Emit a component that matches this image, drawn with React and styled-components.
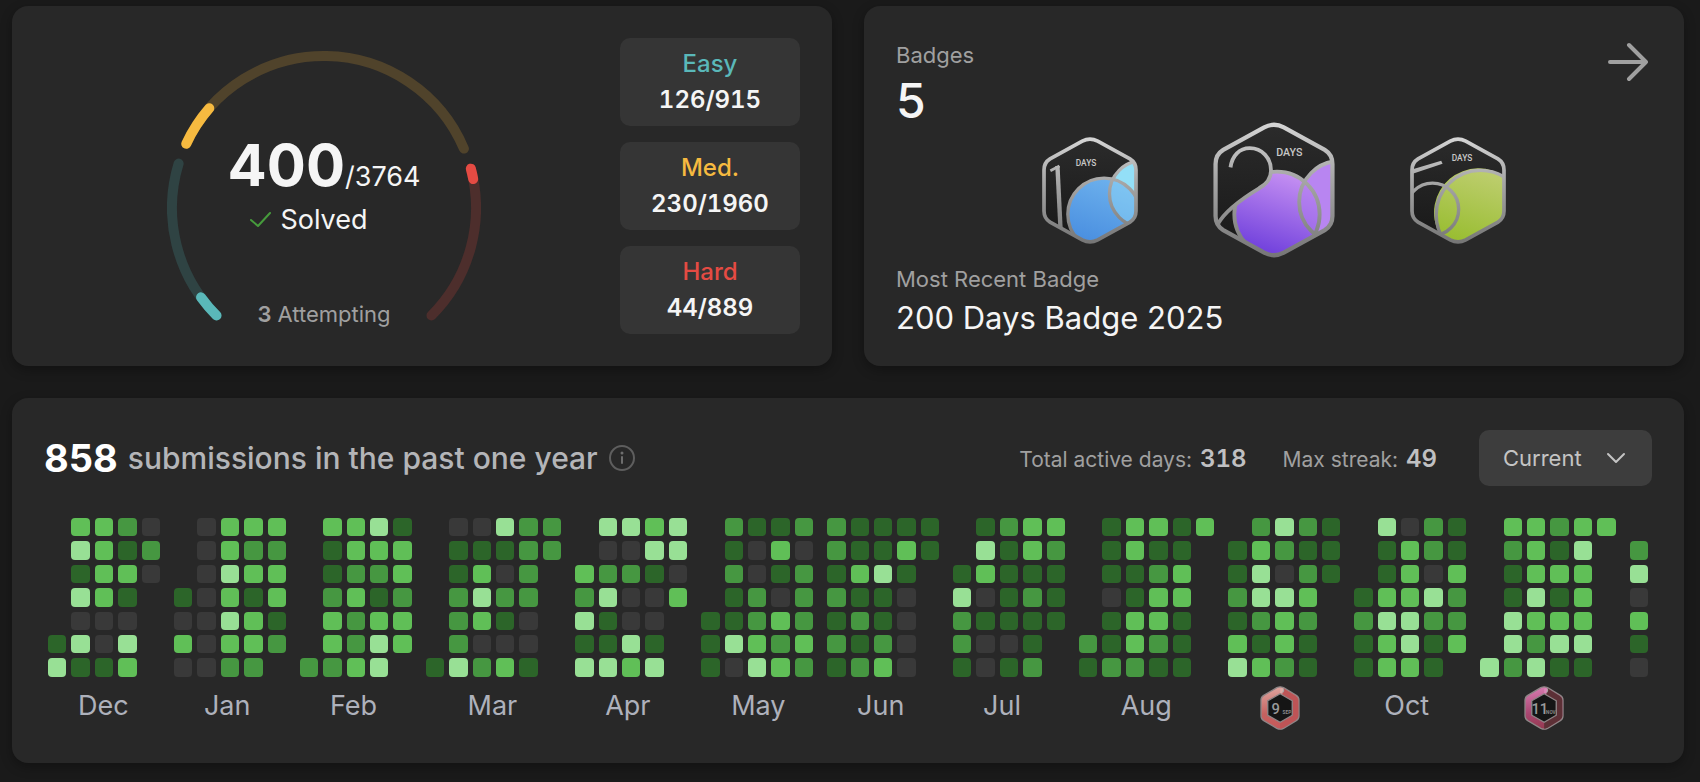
import React from "react";
import styled, { createGlobalStyle } from "styled-components";

// one string per weekday, one character per week
// "." no day, 0 nothing submitted, 1-4 how busy the day was
const months = [
  { key: "dec", label: "Dec", days: [".3320", ".4312", ".1330", ".431.", ".000.", "1404.", "4113."] },
  { key: "jan", label: "Jan", days: [".0333", ".0322", ".0433", "10313", "00431", "30332", "0022."] },
  { key: "feb", label: "Feb", days: [".3341", ".1333", ".1223", ".2312", ".3233", ".3243", "2234."] },
  { key: "mar", label: "Mar", days: [".00422", ".11122", ".1302.", ".2422.", ".2310.", ".2000.", "14231."] },
  { key: "apr", label: "Apr", days: [".4434", ".0044", "32210", "24003", "4100.", "1141.", "4434."] },
  { key: "may", label: "May", days: [".2112", ".1030", ".2012", ".1202", "11232", "14323", "10432"] },
  { key: "jun", label: "Jun", days: ["21111", "21131", "1341.", "2110.", "1210.", "2120.", "1230."] },
  { key: "jul", label: "Jul", days: [".1233", ".4132", "13111", "40121", "21111", "2001.", "1012."] },
  { key: "aug", label: "Aug", days: [".13313", ".1311.", ".1123.", ".0133.", ".1331.", "21321.", "12211."] },
  { key: "sep", badge: "9", days: [".2421", "13211", "14021", "2443.", "1232.", "3131.", "4321."] },
  { key: "oct", label: "Oct", days: [".4021", ".1321", ".1303", "13342", "24422", "13413", "1331."] },
  { key: "nov", badge: "11", days: [".33233", ".2314.", ".1333.", ".1413.", ".4333.", ".4244.", "42411."] },
  { key: "dec-now", days: [".", "2", "4", "0", "3", "1", "0"] },
];

const levels = {
  ".": "transparent",
  0: "#393939",
  1: "#2c6529",
  2: "#469741",
  3: "#60bf57",
  4: "#98e095",
};

const stats = [
  { name: "Easy", count: "126/915", color: "#5ab8b9" },
  { name: "Med.", count: "230/1960", color: "#f6ba40" },
  { name: "Hard", count: "44/889", color: "#e54b43" },
];

// angles in degrees, clockwise from three o'clock
const arcs = [
  { from: 135, to: 197, done: 144, color: "#5ab8b9", track: "#2f4343" },
  { from: 205, to: 337, done: 221, color: "#f6ba40", track: "#50432b" },
  { from: 345, to: 405, done: 349, color: "#e54b43", track: "#4d2e2c" },
];

const arcPath = (from, to) => {
  const point = (deg) => {
    const a = (deg * Math.PI) / 180;
    return `${157 + 152 * Math.cos(a)} ${170 + 152 * Math.sin(a)}`;
  };
  return `M${point(from)} A152 152 0 0 1 ${point(to)}`;
};

const HEX =
  "M120 12 Q143 0 166 12 L262 65 Q280 76 280 98 L280 220 Q280 242 262 253 L166 306 Q143 318 120 306 L24 253 Q6 242 6 220 L6 98 Q6 76 24 65 Z";

const BadgeDefs = ({ id, stops }) => (
  <defs>
    <linearGradient id={`${id}-metal`} gradientUnits="userSpaceOnUse" x1="0" y1="0" x2="0" y2="318">
      <stop offset="0" stopColor="#d6d6d6" />
      <stop offset="0.4" stopColor="#a8a8a8" />
      <stop offset="1" stopColor="#757575" />
    </linearGradient>
    <linearGradient id={`${id}-fill`} gradientUnits="userSpaceOnUse" x1="200" y1="100" x2="130" y2="310">
      <stop offset="0" stopColor={stops[0]} />
      <stop offset="1" stopColor={stops[1]} />
    </linearGradient>
    <linearGradient id={`${id}-dark`} x1="0" y1="0" x2="0" y2="1">
      <stop offset="0" stopColor="#2b2b2b" />
      <stop offset="1" stopColor="#181818" />
    </linearGradient>
    <clipPath id={`${id}-hex`}>
      <path d={HEX} />
    </clipPath>
  </defs>
);

const Badge100 = () => (
  <BadgeArt viewBox="0 0 286 318" role="img" aria-label="100 Days Badge">
    <BadgeDefs id="b100" stops={["#70b4ee", "#4a8fe0"]} />
    <path d={HEX} fill="url(#b100-dark)" />
    <g clipPath="url(#b100-hex)" fill="none" stroke="url(#b100-metal)" strokeWidth="10">
      <circle cx="300" cy="169" r="99" fill="#8edcf6" stroke="none" />
      <circle cx="185" cy="230" r="108" fill="url(#b100-fill)" stroke="none" />
      <circle cx="300" cy="169" r="99" fill="#9be4fa" fillOpacity="0.4" stroke="none" />
      <circle cx="185" cy="230" r="108" />
      <circle cx="300" cy="169" r="99" />
      <path d="M46 86 L55 270" strokeWidth="13" />
      <path d="M25 100 L52 86" strokeWidth="8" />
    </g>
    <path d={HEX} fill="none" stroke="url(#b100-metal)" strokeWidth="11" />
    <BadgeText x="131" y="86">DAYS</BadgeText>
  </BadgeArt>
);

const Badge200 = () => (
  <BadgeArt $large viewBox="0 0 286 318" role="img" aria-label="200 Days Badge">
    <BadgeDefs id="b200" stops={["#d09af5", "#7040dc"]} />
    <clipPath id="b200-two">
      <path d="M136 0 V113 C136 135 124 146 108 155 C80 172 30 205 12 238 V318 H286 V0 Z" />
    </clipPath>
    <path d={HEX} fill="url(#b200-dark)" />
    <g clipPath="url(#b200-hex)" fill="none" stroke="url(#b200-metal)" strokeWidth="9">
      <g clipPath="url(#b200-two)">
        <circle cx="298" cy="187" r="96" fill="#c08df2" stroke="none" />
        <circle cx="150" cy="216" r="100" fill="url(#b200-fill)" stroke="none" />
        <circle cx="298" cy="187" r="96" fill="#b07cf0" fillOpacity="0.45" stroke="none" />
        <circle cx="150" cy="216" r="100" />
        <circle cx="298" cy="187" r="96" />
      </g>
      <path d="M41 106 C45 78 62 61 86 61 C115 61 136 84 136 113 C136 135 124 146 108 155 C80 172 30 205 12 238" />
    </g>
    <path d={HEX} fill="none" stroke="url(#b200-metal)" strokeWidth="10" />
    <BadgeText x="179" y="79">DAYS</BadgeText>
  </BadgeArt>
);

const Badge50 = () => (
  <BadgeArt viewBox="0 0 286 318" role="img" aria-label="50 Days Badge">
    <BadgeDefs id="b50" stops={["#bccd6c", "#98bd30"]} />
    <path d={HEX} fill="url(#b50-dark)" />
    <g clipPath="url(#b50-hex)" fill="none" stroke="url(#b50-metal)" strokeWidth="10">
      <path d="M88 289 A132 132 0 0 1 286 122 V318 H140 Z" fill="url(#b50-fill)" stroke="none" />
      <circle cx="210" cy="231" r="132" />
      <circle cx="67" cy="215" r="78" />
      <path d="M8 96 L93 70 L97 79 L8 109 Z" fill="url(#b50-metal)" stroke="none" />
    </g>
    <path d={HEX} fill="none" stroke="url(#b50-metal)" strokeWidth="11" />
    <BadgeText x="155" y="70">DAYS</BadgeText>
  </BadgeArt>
);

const MonthBadge = ({ value }) => {
  const sep = value === "9";
  const id = `m${value}`;
  return (
    <MonthArt viewBox="0 0 119 131" role="img" aria-label={sep ? "September badge" : "November badge"}>
      <defs>
        <linearGradient id={id} x1="0.4" y1="0" x2="0.5" y2="1">
          <stop offset="0" stopColor={sep ? "#dfa59f" : "#d77bb0"} />
          <stop offset="0.6" stopColor={sep ? "#c56260" : "#a84670"} />
          <stop offset="1" stopColor={sep ? "#c8585a" : "#963a50"} />
        </linearGradient>
      </defs>
      <path
        d="M50 5 Q60 0 70 5 L108 28 Q116 33 116 42 V89 Q116 98 108 103 L70 126 Q60 131 50 126 L11 103 Q3 98 3 89 V42 Q3 33 11 28 Z"
        fill={`url(#${id})`}
        stroke="#8e8586"
        strokeWidth="4"
      />
      <path
        d="M70 7 L106 29 Q114 34 114 42 V89 Q114 97 106 102 L70 124 Q64 127 60 127 V106 L96 86 V45 L66 27 Z"
        fill={sep ? "#bd5456" : "#5c3036"}
      />
      <path d="M66 6 Q72 12 68 18 L60 23 V8 Z" fill={sep ? "#dcaea8" : "#dd86b8"} />
      <path d="M70 8 Q72 14 67 20" fill="none" stroke="#aaa" strokeWidth="3" />
      <path d="M60 23 L96 44 V87 L60 108 L23 87 V44 Z" fill="#151515" stroke="#8e8586" strokeWidth="4" />
      <MonthNumber x="47" y="84">{value}</MonthNumber>
      <MonthName x="80" y="84">{sep ? "SEP" : "NOV"}</MonthName>
    </MonthArt>
  );
};

const Progress = () => (
  <ProgressBox>
    <Ring viewBox="0 0 314 296" aria-hidden="true">
      {arcs.map((arc) => (
        <g key={arc.from} fill="none" strokeWidth="10" strokeLinecap="round">
          <path d={arcPath(arc.from, arc.to)} stroke={arc.track} />
          <path d={arcPath(arc.from, arc.done)} stroke={arc.color} />
        </g>
      ))}
    </Ring>
    <ProgressText>
      <Total>
        <b>400</b>/3764
      </Total>
      <Solved>
        <svg width="22" height="16" viewBox="0 0 22 16" aria-hidden="true">
          <path d="M1 8 L8 14 L20 1" fill="none" stroke="#469b3c" strokeWidth="2" strokeLinecap="round" strokeLinejoin="round" />
        </svg>
        <span>Solved</span>
      </Solved>
      <Attempting>
        <b>3</b> Attempting
      </Attempting>
    </ProgressText>
  </ProgressBox>
);

const App = () => {
  return (
    <Page>
      <GlobalStyle />
      <TopCards>
        <SolvedCard>
          <Progress />
          <Stats>
            {stats.map(({ name, count, color }) => (
              <Stat key={name}>
                <StatName $color={color}>{name}</StatName>
                <StatCount>{count}</StatCount>
              </Stat>
            ))}
          </Stats>
        </SolvedCard>
        <BadgesCard>
          <BadgesHead>
            <div>
              <Muted>Badges</Muted>
              <BadgeCount>5</BadgeCount>
            </div>
            <ArrowLink href="#badges" aria-label="All badges">
              <svg width="40" height="40" viewBox="0 0 40 40" aria-hidden="true">
                <path d="M2 20 H38 M21 3 L38 20 L21 37" fill="none" stroke="#a0a0a0" strokeWidth="4" strokeLinecap="round" strokeLinejoin="round" />
              </svg>
            </ArrowLink>
          </BadgesHead>
          <BadgeRow>
            <Badge100 />
            <Badge200 />
            <Badge50 />
          </BadgeRow>
          <Recent>
            <Muted>Most Recent Badge</Muted>
            <RecentName>200 Days Badge 2025</RecentName>
          </Recent>
        </BadgesCard>
      </TopCards>

      <CalendarCard>
        <CalendarHead>
          <Submissions>
            <b>858</b>
            <span>submissions in the past one year</span>
            <svg width="28" height="28" viewBox="0 0 28 28" aria-hidden="true">
              <circle cx="14" cy="14" r="12" fill="none" stroke="#5e5e5e" strokeWidth="2" />
              <circle cx="14" cy="9" r="1.5" fill="#6e6e6e" />
              <path d="M14 13 V19" stroke="#6e6e6e" strokeWidth="2" strokeLinecap="round" />
            </svg>
          </Submissions>
          <Summary>
            Total active days: <b>318</b>
          </Summary>
          <Summary>
            Max streak: <b>49</b>
          </Summary>
          <Picker>
            <select aria-label="Year" defaultValue="Current">
              <option>Current</option>
              <option>2025</option>
              <option>2024</option>
            </select>
            <svg width="20" height="12" viewBox="0 0 20 12" aria-hidden="true">
              <path d="M2 2 L10 10 L18 2" fill="none" stroke="#c4c4c4" strokeWidth="2" strokeLinecap="round" strokeLinejoin="round" />
            </svg>
          </Picker>
        </CalendarHead>
        <Calendar>
          {months.map(({ key, label, badge, days }) => (
            <Month key={key} $weeks={days[0].length}>
              <Days $weeks={days[0].length}>
                {days.join("").split("").map((level, i) => (
                  <Day key={i} $level={level} />
                ))}
              </Days>
              <MonthLabel>
                {label}
                {badge && <MonthBadge value={badge} />}
              </MonthLabel>
            </Month>
          ))}
        </Calendar>
      </CalendarCard>
    </Page>
  );
};

export default App;

const GlobalStyle = createGlobalStyle`
  * {
    box-sizing: border-box;
  }
  body {
    margin: 0;
    background-color: #1a1a1a;
    color: #f5f5f5;
    font-family: "Inter", "Liberation Sans", sans-serif;
    font-size: 22px;
  }
`;
const Page = styled.main`
  display: flex;
  flex-direction: column;
  gap: 32px;
  padding: 6px 16px 18px 12px;
`;
const TopCards = styled.div`
  display: grid;
  grid-template-columns: 1fr 1fr;
  gap: 32px;
`;
const Card = styled.section`
  background-color: #282828;
  border-radius: 16px;
  padding: 32px;
  box-shadow: 0 4px 12px rgba(0, 0, 0, 0.3);
`;
const SolvedCard = styled(Card)`
  display: flex;
  gap: 16px;
`;
const ProgressBox = styled.div`
  flex: 1;
  display: grid;
  justify-items: center;
  > * {
    grid-area: 1 / 1;
  }
`;
const Ring = styled.svg`
  width: 314px;
  height: 296px;
`;
const ProgressText = styled.div`
  display: flex;
  flex-direction: column;
  align-items: center;
  padding-top: 98px;
`;
const Total = styled.div`
  font-size: 27px;
  line-height: 1;
  b {
    font-size: 58px;
    font-weight: 700;
  }
`;
const Solved = styled.div`
  display: grid;
  grid-template-columns: 1fr auto 1fr;
  align-items: center;
  gap: 8px;
  align-self: stretch;
  margin-top: 8px;
  font-size: 27px;
  line-height: 36px;
  svg {
    justify-self: end;
  }
`;
const Attempting = styled.div`
  margin-top: auto;
  padding-bottom: 4px;
  color: #a0a0a0;
  line-height: 32px;
  b {
    font-weight: 600;
  }
`;
const Stats = styled.div`
  display: flex;
  flex-direction: column;
  gap: 16px;
  width: 180px;
`;
const Stat = styled.div`
  padding: 8px;
  border-radius: 10px;
  background-color: #353535;
  font-size: 24px;
  line-height: 36px;
  text-align: center;
`;
const StatName = styled.div`
  color: ${({ $color }) => $color};
  font-weight: 500;
`;
const StatCount = styled.div`
  font-weight: 600;
  font-variant-numeric: tabular-nums;
`;
const BadgesCard = styled(Card)`
  display: flex;
  flex-direction: column;
`;
const BadgesHead = styled.div`
  display: flex;
  justify-content: space-between;
  align-items: flex-start;
`;
const Muted = styled.div`
  color: #a0a0a0;
  line-height: 34px;
`;
const BadgeCount = styled.div`
  font-size: 48px;
  font-weight: 500;
  line-height: 58px;
`;
const ArrowLink = styled.a`
  display: flex;
  padding: 4px 4px 0 0;
`;
const BadgeRow = styled.div`
  display: flex;
  justify-content: center;
  align-items: center;
  gap: 75px;
  height: 120px;
`;
const BadgeArt = styled.svg`
  flex: none;
  width: ${({ $large }) => ($large ? 122 : 96)}px;
  height: ${({ $large }) => ($large ? 136 : 107)}px;
`;
const BadgeText = styled.text`
  fill: #c8c8c8;
  font-family: "Liberation Sans Narrow", "Roboto", sans-serif;
  font-size: 25px;
  font-weight: 500;
  text-anchor: middle;
`;
const Recent = styled.div`
  display: flex;
  flex-direction: column;
  gap: 6px;
  margin-top: auto;
`;
const RecentName = styled.div`
  font-size: 31px;
  line-height: 32px;
`;
const CalendarCard = styled(Card)`
  display: flex;
  flex-direction: column;
  gap: 32px;
`;
const CalendarHead = styled.div`
  display: flex;
  align-items: center;
  white-space: nowrap;
`;
const Submissions = styled.div`
  flex: 1;
  display: flex;
  align-items: center;
  gap: 10px;
  color: #b4b5b8;
  font-size: 30px;
  font-weight: 500;
  b {
    color: #fff;
    font-size: 38px;
    font-weight: 700;
  }
`;
const Summary = styled.div`
  margin-right: 36px;
  color: #a0a0a0;
  font-size: 21px;
  b {
    margin-left: 2px;
    color: #c0c0c2;
    font-size: 24px;
    font-weight: 600;
    font-variant-numeric: tabular-nums;
  }
`;
const Picker = styled.div`
  display: grid;
  align-items: center;
  margin-left: 6px;
  > * {
    grid-area: 1 / 1;
  }
  select {
    appearance: none;
    width: 173px;
    height: 56px;
    padding: 0 24px;
    border: 0;
    border-radius: 10px;
    background-color: #3d3d3d;
    color: #c4c4c4;
    font: inherit;
  }
  svg {
    justify-self: end;
    margin-right: 26px;
    pointer-events: none;
  }
`;
const Calendar = styled.div`
  display: flex;
  gap: 14px;
  padding: 0 4px;
`;
const Month = styled.div`
  flex: ${({ $weeks }) => `${$weeks} 0 ${($weeks - 1) * 5}px`};
  min-width: 0;
`;
const Days = styled.div`
  display: grid;
  grid-template-columns: ${({ $weeks }) => `repeat(${$weeks}, 1fr)`};
  gap: 5px;
`;
const Day = styled.div`
  aspect-ratio: 1;
  border-radius: 4px;
  background-color: ${({ $level }) => levels[$level]};
`;
const MonthLabel = styled.div`
  height: 45px;
  margin-top: 9px;
  padding-left: calc(50% - 26px);
  color: #aeb1bb;
  font-size: 27px;
  line-height: 40px;
`;
const MonthArt = styled.svg`
  display: block;
  width: 40px;
  height: 44px;
  margin-left: 2px;
`;
const MonthNumber = styled.text`
  fill: #9a9a9a;
  font-family: "Roboto", sans-serif;
  font-size: 44px;
  font-weight: 500;
  text-anchor: middle;
`;
const MonthName = styled.text`
  fill: #8a8a8a;
  font-family: "Roboto", sans-serif;
  font-size: 14px;
  font-weight: 700;
  text-anchor: middle;
`;
